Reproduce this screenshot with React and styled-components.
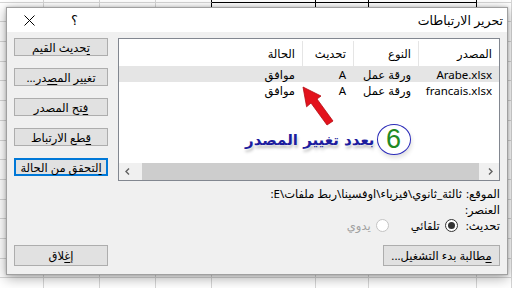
import React from 'react';
import styled, { createGlobalStyle } from 'styled-components';

const FONT = `"Noto Sans", "DejaVu Sans", sans-serif`;

const Global = createGlobalStyle`
  html, body { margin: 0; padding: 0; width: 512px; height: 288px; overflow: hidden; background: #fff; }
  #root { width: 512px; height: 288px; }
`;

const Page = styled.div`
  position: relative;
  width: 512px;
  height: 288px;
  overflow: hidden;
  font-family: ${FONT};
`;

const Sheet = styled.div`
  margin-top: -17px;
  display: grid;
  grid-template-columns: 44px 56px 56px 56px 104px 53px 108px 1fr;
  grid-auto-rows: 19.7px;
  background: #fff;
`;

const Cell = styled.div`
  box-sizing: border-box;
  border-right: 1px solid ${p => (p.$v ? '#000' : '#d6d6d6')};
  border-bottom: 1px solid ${p => (p.$h ? '#000' : '#d6d6d6')};
`;

const Dialog = styled.div`
  position: absolute;
  left: 6px;
  top: 7px;
  width: 502px;
  height: 268px;
  box-sizing: border-box;
  border: 1px solid #a0a0a0;
  background: #f0f0f0;
  box-shadow: 0 3px 12px rgba(0, 0, 0, 0.35), 0 0 3px rgba(0, 0, 0, 0.2);
  display: flex;
  flex-direction: column;
  direction: rtl;
  font-size: 11.5px;
  color: #000;
`;

const TitleBar = styled.div`
  height: 24px;
  background: #fff;
  display: flex;
  align-items: center;
  padding-right: 4px;
`;

const Title = styled.div`
  font-size: 12.5px;
  flex: 1;
`;

const TitleButton = styled.div`
  width: 45px;
  height: 24px;
  display: flex;
  align-items: center;
  justify-content: center;
  font-size: 13px;
`;

const Body = styled.div`
  flex: 1;
  display: grid;
  grid-template-columns: 1fr 94px;
  grid-template-rows: 1fr 21px;
  column-gap: 10px;
  padding: 6px 7px 8px 7px;
`;

const Main = styled.div`
  display: flex;
  flex-direction: column;
`;

const SideButtons = styled.div`
  display: flex;
  flex-direction: column;
  gap: 12px;
`;

const Button = styled.div`
  box-sizing: border-box;
  height: ${p => p.$h || 18}px;
  width: ${p => (p.$w ? p.$w + 'px' : '100%')};
  justify-self: start;
  background: #e1e1e1;
  border: 1px solid ${p => (p.$focus ? '#0078d7' : '#adadad')};
  box-shadow: ${p => (p.$focus ? 'inset 0 0 0 1px #0078d7' : 'none')};
  display: flex;
  align-items: center;
  justify-content: center;
  font-size: 11.5px;
  white-space: nowrap;
  u { text-decoration: underline; text-underline-offset: 2px; }
`;

const ListBox = styled.div`
  position: relative;
  height: 143px;
  box-sizing: border-box;
  border: 1px solid #828790;
  background: #fff;
  display: flex;
  flex-direction: column;
`;

const Columns = styled.div`
  display: grid;
  grid-template-columns: 81px 65px 51px 80px 1fr;
  height: ${p => p.$h}px;
  margin-top: ${p => p.$mt || 0}px;
  background: ${p => p.$bg || 'transparent'};
`;

const HeadCell = styled.div`
  box-sizing: border-box;
  border-left: 1px solid ${p => (p.$last ? 'transparent' : '#e5e5e5')};
  padding: 0 7px;
  display: flex;
  align-items: center;
`;

const DataCell = styled.div`
  box-sizing: border-box;
  padding: 0 7px;
  display: flex;
  align-items: center;
  white-space: nowrap;
`;

const Spacer = styled.div`
  flex: 1;
`;

const ScrollBar = styled.div`
  direction: ltr;
  height: 17px;
  display: flex;
  background: #f0f0f0;
`;

const ScrollArrow = styled.div`
  width: 17px;
  display: flex;
  align-items: center;
  justify-content: center;
`;

const ScrollTrack = styled.div`
  flex: 1;
  display: flex;
  padding: 0 3px 0 6px;
`;

const Thumb = styled.div`
  flex: 1;
  background: #cdcdcd;
`;

const ArrowMark = styled.svg`
  position: absolute;
  left: 172px;
  top: 42px;
  overflow: visible;
`;

const Note = styled.div`
  position: absolute;
  left: 126px;
  top: 85px;
  direction: ltr;
  display: flex;
  align-items: center;
  gap: 2px;
`;

const NoteText = styled.span`
  direction: rtl;
  font-family: "DejaVu Sans", sans-serif;
  font-weight: bold;
  font-size: 15px;
  color: #1d1d9e;
  text-shadow: 0 0 2px #fff, 1px 3px 3px rgba(0, 0, 0, 0.25);
  white-space: nowrap;
`;

const NoteCircle = styled.div`
  width: 34px;
  height: 31px;
  box-sizing: border-box;
  border: 1px solid #2a2ab8;
  border-radius: 50%;
  display: flex;
  align-items: center;
  justify-content: center;
  font-family: "Liberation Sans", sans-serif;
  font-size: 27px;
  color: #1f8a24;
  box-shadow: 1px 3px 4px rgba(0, 0, 0, 0.12);
`;

const Info = styled.div`
  margin-top: 4px;
  display: flex;
  flex-direction: column;
`;

const InfoRow = styled.div`
  height: ${p => p.$h || 16}px;
  display: flex;
  align-items: center;
  gap: ${p => p.$gap}px;
  white-space: nowrap;
`;

const PathValue = styled.span`
  direction: rtl;
`;

const RadioOption = styled.div`
  display: flex;
  align-items: center;
  gap: 5px;
  margin-left: 14px;
  color: ${p => (p.$disabled ? '#a0a0a0' : '#000')};
`;

const RadioDot = styled.span`
  width: 13px;
  height: 13px;
  box-sizing: border-box;
  border-radius: 50%;
  border: 1px solid ${p => (p.$disabled ? '#c4c4c4' : '#333')};
  background: #fff;
  display: flex;
  align-items: center;
  justify-content: center;
  &::after {
    content: '';
    width: 7px;
    height: 7px;
    border-radius: 50%;
    background: ${p => (p.$checked ? '#333' : 'transparent')};
  }
`;

const sheetCols = 8;
const sheetRows = 16;
const darkV = (r, c) => r <= 1 && (c === 3 || c === 4 || c === 5 || c === 6);
const darkH = (r, c) => r === 0 && (c === 4 || c === 5 || c === 6);

function Chevron({ dir }) {
  const pts = dir === 'left' ? '5,1.5 2,4.5 5,7.5' : '2,1.5 5,4.5 2,7.5';
  return (
    <svg width="7" height="9" viewBox="0 0 7 9">
      <polyline points={pts} fill="none" stroke="#606060" strokeWidth="1.4" />
    </svg>
  );
}

export default function App() {
  const cells = [];
  for (let r = 0; r < sheetRows; r++) {
    for (let c = 0; c < sheetCols; c++) {
      cells.push(<Cell key={`${r}-${c}`} $v={darkV(r, c)} $h={darkH(r, c)} />);
    }
  }
  const rows = [
    ['Arabe.xlsx', 'ورقة عمل', 'A', 'موافق'],
    ['francais.xlsx', 'ورقة عمل', 'A', 'موافق'],
  ];
  return (
    <>
      <Global />
      <Page>
        <Sheet>{cells}</Sheet>
        <Dialog>
          <TitleBar>
            <Title>تحرير الارتباطات</Title>
            <TitleButton>؟</TitleButton>
            <TitleButton>
              <svg width="11" height="11" viewBox="0 0 11 11">
                <path d="M0.5 0.5 L10.5 10.5 M10.5 0.5 L0.5 10.5" stroke="#000" strokeWidth="1" />
              </svg>
            </TitleButton>
          </TitleBar>
          <Body>
            <Main>
              <ListBox>
                <Columns $h={25} $mt={2}>
                  <HeadCell>المصدر</HeadCell>
                  <HeadCell>النوع</HeadCell>
                  <HeadCell>تحديث</HeadCell>
                  <HeadCell $last>الحالة</HeadCell>
                  <div />
                </Columns>
                {rows.map((r, i) => (
                  <Columns key={i} $h={16} $bg={i === 0 ? '#e5e5e5' : 'transparent'}>
                    {r.map((t, j) => (
                      <DataCell key={j}>{t}</DataCell>
                    ))}
                    <div />
                  </Columns>
                ))}
                <Spacer />
                <ScrollBar>
                  <ScrollArrow><Chevron dir="left" /></ScrollArrow>
                  <ScrollTrack><Thumb /></ScrollTrack>
                  <ScrollArrow><Chevron dir="right" /></ScrollArrow>
                </ScrollBar>
                <ArrowMark width="50" height="50" viewBox="0 0 50 50">
                  <path
                    d="M12 6 L30 15 L26 18 L42 40 L36 44 L20 22 L15.6 25.8 Z"
                    fill="#e3121c"
                    stroke="#b50d14"
                    strokeWidth="0.8"
                    strokeLinejoin="round"
                  />
                </ArrowMark>
                <Note>
                  <NoteText>بعدد تغيير المصدر</NoteText>
                  <NoteCircle>6</NoteCircle>
                </Note>
              </ListBox>
              <Info>
                <InfoRow $gap={4}>
                  <span>الموقع:</span>
                  <PathValue>ثالثة_ثانوي\فيزياء\اوفسينا\ربط ملفات\E:</PathValue>
                </InfoRow>
                <InfoRow $gap={4}>
                  <span>العنصر:</span>
                </InfoRow>
                <InfoRow $gap={8}>
                  <span>تحديث:</span>
                  <RadioOption>
                    <RadioDot $checked />
                    <span>تلقائي</span>
                  </RadioOption>
                  <RadioOption $disabled>
                    <RadioDot $disabled />
                    <span>يدوي</span>
                  </RadioOption>
                </InfoRow>
              </Info>
            </Main>
            <SideButtons>
              <Button><span><u>ت</u>حديث القيم</span></Button>
              <Button><span>تغيير الم<u>ص</u>در...</span></Button>
              <Button><span><u>ف</u>تح المصدر</span></Button>
              <Button><span><u>ق</u>طع الارتباط</span></Button>
              <Button $focus><span><u>ا</u>لتحقق من الحالة</span></Button>
            </SideButtons>
            <Button $h={21} $w={117}><span><u>م</u>طالبة بدء التشغيل...</span></Button>
            <Button $h={21}><span>إ<u>غ</u>لاق</span></Button>
          </Body>
        </Dialog>
      </Page>
    </>
  );
}
